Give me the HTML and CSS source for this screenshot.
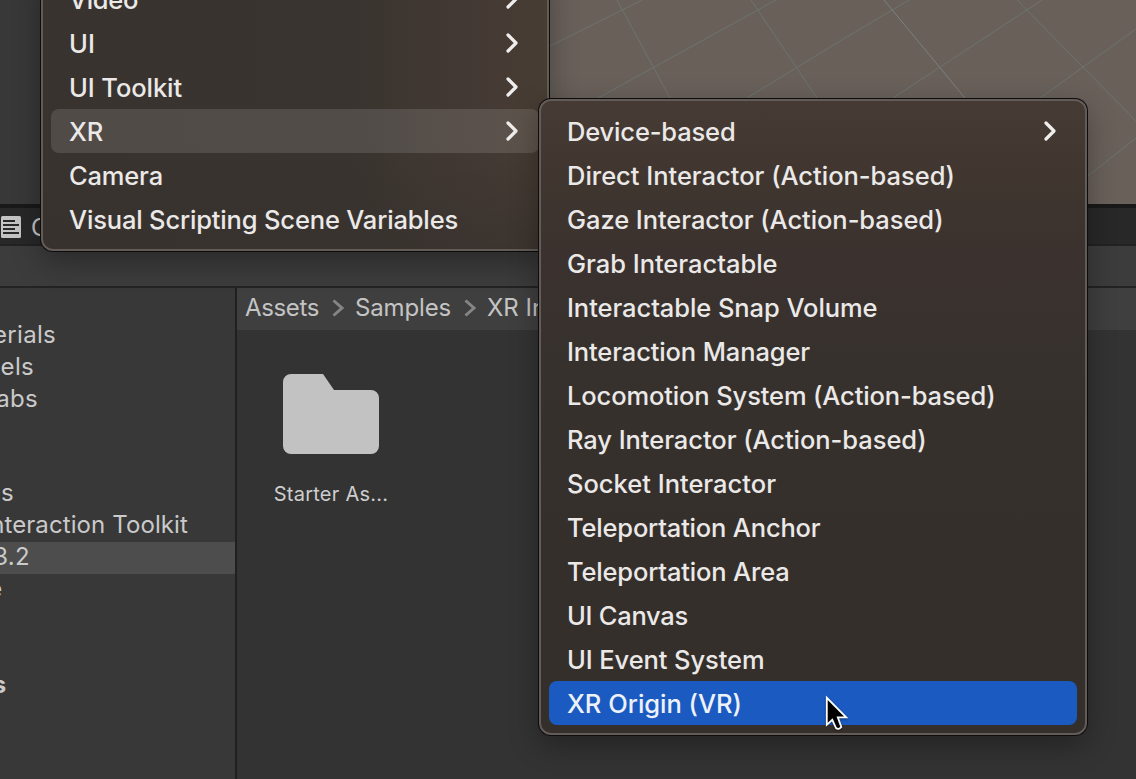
FILE: index.html
```html
<!DOCTYPE html>
<html lang="en">
<head>
<meta charset="utf-8">
<title>Editor</title>
<link rel="stylesheet" href="styles.css">
</head>
<body>
<div class="editor">
  <div class="views">
    <div class="hierarchy"></div>
    <svg class="scene" width="586" height="204" viewBox="550 0 586 204" fill="none">
      <g stroke="#6c746e" stroke-width="1">
        <path d="M550 46L642 0M598 98L776 0M747 98L840 41L909 0M893 98L1042 0M1040 98L1136 29M1088 176L1136 138"/>
        <path d="M617 0L670 98M751 0L817 98M1017 0L1136 121"/>
      </g>
      <path stroke="#7b8080" d="M884 0L965 98"/>
    </svg>
  </div>
  <div class="tabs">
    <svg width="20" height="22" viewBox="0 0 20 22"><rect width="20" height="22" rx="1.5" fill="#c4c4c4"/><path d="M2 5h12M2 9h16M2 13h12M2 17h16" stroke="#282828" stroke-width="2"/></svg>
    <span>Console</span>
  </div>
  <div class="toolbar"></div>
  <div class="project">
    <div class="tree">
      <div class="row"><span class="label r1">Materials</span></div>
      <div class="row"><span class="label r2">Models</span></div>
      <div class="row gap"><span class="label r3">Prefabs</span></div>
      <div class="row"><span class="label r4">Samples</span></div>
      <div class="row"><span class="label r5">XR Interaction Toolkit</span></div>
      <div class="row selected"><span class="label r6">2.3.2</span></div>
      <div class="row gap2"><span class="label r7">Scene</span></div>
      <div class="row"><span class="label r8">Packages</span></div>
    </div>
    <div class="content">
      <div class="crumbs">
        <span data-w="74">Assets</span>
        <svg width="12" height="18" viewBox="0 0 12 18"><path d="M1.5 1.5L10 9L1.5 16.500" fill="none" stroke="#858585" stroke-width="3"/></svg>
        <span data-w="96">Samples</span>
        <svg width="12" height="18" viewBox="0 0 12 18"><path d="M1.500 1.500L10 9L1.500 16.500" fill="none" stroke="#858585" stroke-width="3"/></svg>
        <span class="last">XR Interaction Toolkit</span>
      </div>
      <div class="asset">
        <svg width="96" height="80" viewBox="0 0 96 80"><path d="M8 0H40L51 16H88a8 8 0 0 1 8 8V72a8 8 0 0 1-8 8H8a8 8 0 0 1-8-8V8a8 8 0 0 1 8-8Z" fill="#c2c2c2"/></svg>
        <span data-w="114.500">Starter As...</span>
      </div>
    </div>
  </div>
</div>

<div class="menu menu-main">
  <div class="item"><span data-w="69">Video</span><svg class="chev" viewBox="0 0 12 20"><path d="M2 2L10 10L2 18"/></svg></div>
  <div class="item"><span data-w="26">UI</span><svg class="chev" viewBox="0 0 12 20"><path d="M2 2L10 10L2 18"/></svg></div>
  <div class="item"><span data-w="113">UI Toolkit</span><svg class="chev" viewBox="0 0 12 20"><path d="M2 2L10 10L2 18"/></svg></div>
  <div class="item open"><span data-w="34">XR</span><svg class="chev" viewBox="0 0 12 20"><path d="M2 2L10 10L2 18"/></svg></div>
  <div class="item"><span data-w="94">Camera</span></div>
  <div class="item"><span data-w="389">Visual Scripting Scene Variables</span></div>
</div>

<div class="menu menu-xr">
  <div class="item"><span data-w="168.500">Device-based</span><svg class="chev" viewBox="0 0 12 20"><path d="M2 2L10 10L2 18"/></svg></div>
  <div class="item"><span data-w="388">Direct Interactor (Action-based)</span></div>
  <div class="item"><span data-w="376.500">Gaze Interactor (Action-based)</span></div>
  <div class="item"><span data-w="210.500">Grab Interactable</span></div>
  <div class="item"><span data-w="310.5">Interactable Snap Volume</span></div>
  <div class="item"><span data-w="243">Interaction Manager</span></div>
  <div class="item"><span data-w="428.500">Locomotion System (Action-based)</span></div>
  <div class="item"><span data-w="359.500">Ray Interactor (Action-based)</span></div>
  <div class="item"><span data-w="209">Socket Interactor</span></div>
  <div class="item"><span data-w="253.500">Teleportation Anchor</span></div>
  <div class="item"><span data-w="222.500">Teleportation Area</span></div>
  <div class="item"><span data-w="121">UI Canvas</span></div>
  <div class="item"><span data-w="197.500">UI Event System</span></div>
  <div class="item active"><span data-w="175">XR Origin (VR)</span></div>
</div>

<svg class="cursor" width="26" height="38" viewBox="0 0 26 38"><path d="M2.800 3.800V30.800L8.300 25.800L12 34Q14.500 36.200 17.300 33L13.800 23.300H22.200Z" fill="#000" stroke="#fff" stroke-width="1.800"/></svg>
<script src="fit.js"></script>
</body>
</html>
```
FILE: styles.css
```css
* { box-sizing: border-box; }
body { margin: 0; width: 1136px; height: 779px; overflow: hidden; position: relative; background: #333; font-family: Inter, "Liberation Sans", sans-serif; }
.editor { display: flex; flex-direction: column; height: 779px; color: #c4c4c4; font-size: 24px; }
.views { display: flex; height: 208px; flex: none; border-bottom: 4px solid #191919; background: #383838; }
.hierarchy { width: 550px; }
.scene { display: block; background: #69605a; }
.tabs { flex: none; height: 38px; display: flex; align-items: center; gap: 10px; padding: 2px 0 0 1px; background: #282828; border-bottom: 2px solid #222; }
.tabs span { width: 12px; overflow: hidden; }
.toolbar { flex: none; height: 42px; background: #3c3c3c; border-bottom: 2px solid #232323; }
.project { flex: 1; min-height: 0; display: flex; }
.tree { width: 237px; flex: none; padding-top: 32px; background: #383838; border-right: 2px solid #202020; overflow: hidden; }
.row { height: 32px; line-height: 32px; display: flex; justify-content: flex-end; white-space: nowrap; letter-spacing: .3px; }
.gap { margin-bottom: 62px; }
.gap2 { margin-bottom: 64px; }
.selected { background: #4d4d4d; }
.label { flex: none; margin-top: -1px; color: #cacaca; }
.r1 { margin-right: 179px; }
.r2 { margin-right: 201px; }
.r3 { margin-right: 197px; }
.r4 { margin-right: 221px; }
.r5 { margin-right: 47px; letter-spacing: .1px; }
.r6 { margin-right: 205px; }
.r7 { margin-right: 232.500px; }
.r8 { margin-right: 228.500px; font-weight: 700; }
.content { flex: 1; min-width: 0; background: #333; }
.crumbs { height: 42px; padding: 0 0 3px 8px; display: flex; align-items: center; background: #3f3f3f; white-space: nowrap; }
.crumbs svg { margin: 1px 11px 0 13px; flex: none; }
.last { width: 54px; overflow: hidden; }
.asset { width: 114px; margin: 44px 0 0 37px; display: flex; flex-direction: column; align-items: center; font-size: 20px; gap: 28px; white-space: nowrap; color: #cecece; }
.asset span { line-height: 24px; }

.menu { position: absolute; padding: 8px; border: 2px solid #625b57; border-radius: 12px; box-shadow: 0 0 0 1px #0c0c0c, 0 10px 30px rgba(0,0,0,.33); background-clip: padding-box; color: #ebe9e8; font-size: 25.500px; font-weight: 450; }
.menu-main { left: 41px; top: -33px; width: 508px; background-color: #38322e; background-image: linear-gradient(to bottom, transparent 62%, rgba(56,50,46,.8)), linear-gradient(90deg, #39332f 0, #39342f 62%, #433934 84%, #483d33 100%); }
.menu-xr { left: 539px; top: 99px; width: 548px; background-color: #352f2b; background-image: linear-gradient(#463a35 0, #40362f 12%, #3b322f 24%, #37312d 40%, #352f2b 70%); }
.item { height: 44px; display: flex; align-items: center; justify-content: space-between; padding: 0 21px 0 18px; border-radius: 8px; white-space: nowrap; }
.open { background: rgba(255,255,255,.12); }
.active { background: #1b5ac0; color: #edf1fa; }
.chev { width: 12px; height: 20px; fill: none; stroke: #f0eeed; stroke-width: 3.200; stroke-linecap: round; stroke-linejoin: round; }
.cursor { position: absolute; left: 824px; top: 694px; filter: drop-shadow(0 1px 1px rgba(0,0,0,.4)); }
```
FILE: fit.js
```js
// Tracks each label to the width given in data-w.
document.querySelectorAll('[data-w]').forEach(function (el) {
  var range = document.createRange();
  range.selectNodeContents(el);
  el.style.letterSpacing = '0px';
  var extra = Number(el.dataset.w) - range.getBoundingClientRect().width;
  el.style.letterSpacing = (extra / el.textContent.length).toFixed(3) + 'px';
});
```
